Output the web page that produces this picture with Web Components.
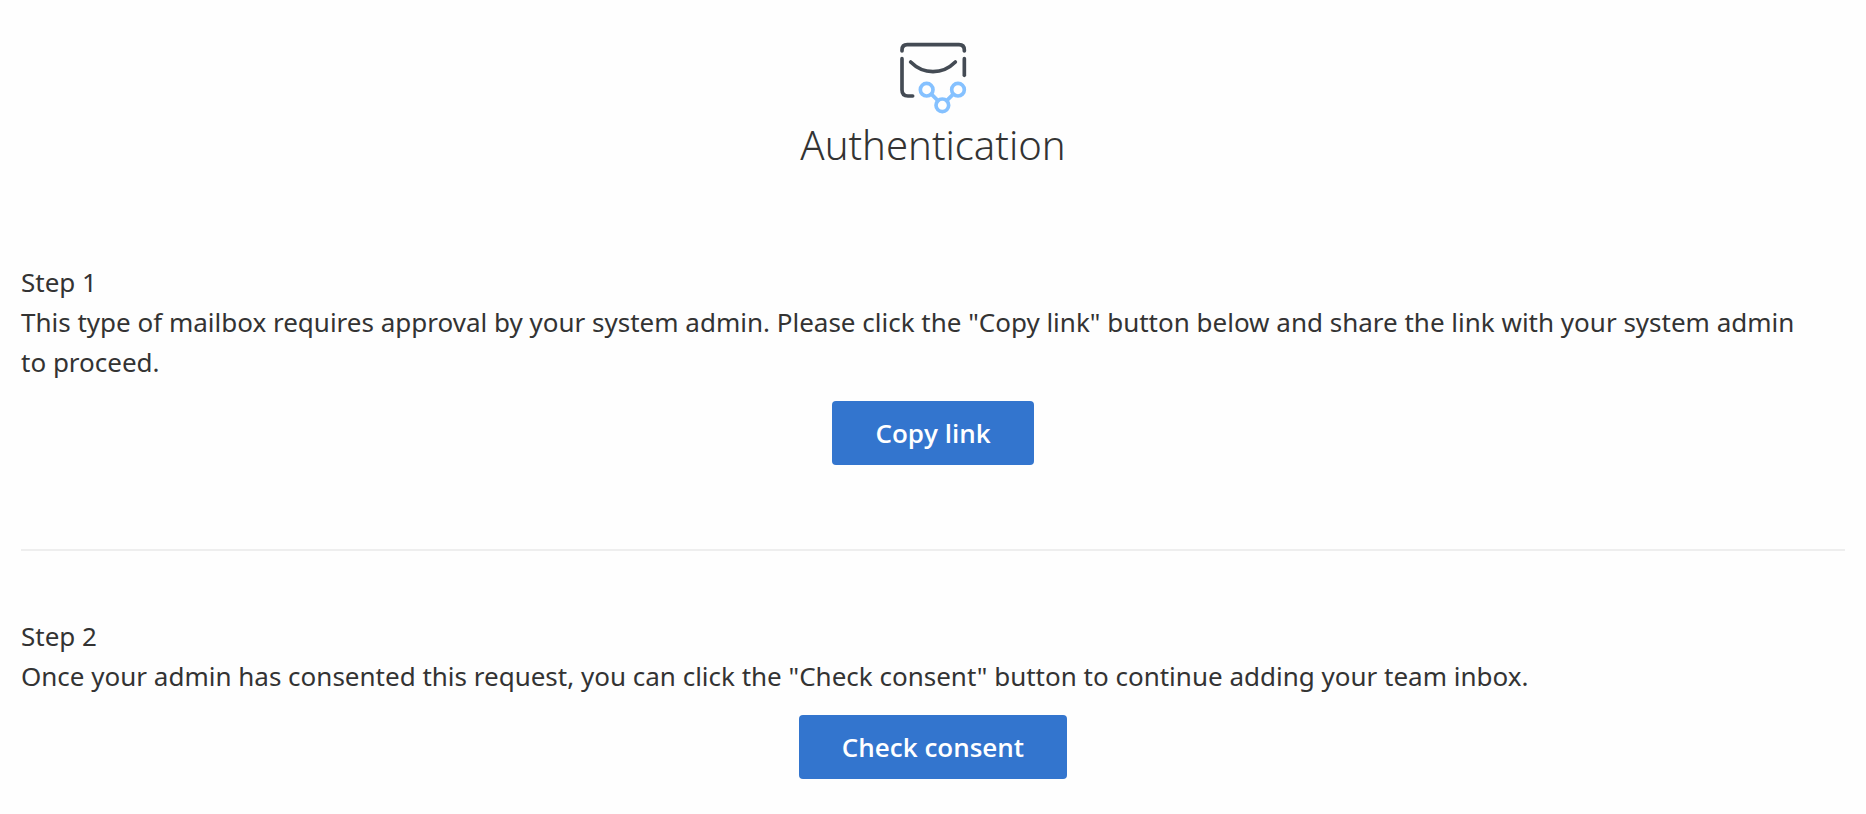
<!DOCTYPE html>
<html lang="en">
<head>
  <meta charset="utf-8">
  <meta name="viewport" content="width=device-width, initial-scale=1">
  <title>Authentication</title>
  <style>
    body {
      margin: 0;
      background: #fefefe;
      color: #333;
      font-family: "Noto Sans", "Open Sans", sans-serif;
      font-size: 26px;
      line-height: 40px;
    }

    .keep {
      white-space: nowrap;
    }
  </style>
</head>
<body>
  <auth-page>
    <auth-header slot="header">Authentication</auth-header>
    <auth-step>
      <span slot="title">Step 1</span>
      This type of mailbox requires approval by your system admin. Please click the "Copy link" button below and share the link with your system admin <span class="keep">to proceed.</span>
      <primary-button slot="action">Copy link</primary-button>
    </auth-step>
    <hr>
    <auth-step>
      <span slot="title">Step 2</span>
      Once your admin has consented this request, you can click the "Check consent" button to continue adding your team inbox.
      <primary-button slot="action">Check consent</primary-button>
    </auth-step>
  </auth-page>

  <script>
    class MailboxIcon extends HTMLElement {
      constructor () {
        super()
        this.attachShadow({ mode: 'open' })
      }

      connectedCallback () {
        this.shadowRoot.innerHTML = `
          <style>
            :host {
              display: block;
            }

            svg {
              display: block;
              width: 70px;
              height: 74px;
            }
          </style>
          <svg viewBox="54 33 210 222" fill="none" stroke-width="11" stroke-linecap="round" aria-hidden="true">
            <g stroke="#444b54">
              <path d="M66 63V60Q66 44 82 44H237Q253 44 253 60V63" />
              <path d="M66 86V180Q66 198 84 198H98" />
              <path d="M253 86V136" />
              <path d="M92 96Q121 125 159 125Q197 125 226 96" />
            </g>
            <g stroke="#85c1ff">
              <path d="M155 193L173 211M219 193L201 211" />
              <circle cx="140" cy="179" r="19" />
              <circle cx="234" cy="179" r="19" />
              <circle cx="187" cy="226" r="19" />
            </g>
          </svg>
        `
      }
    }

    class AuthHeader extends HTMLElement {
      constructor () {
        super()
        this.attachShadow({ mode: 'open' })
      }

      connectedCallback () {
        this.shadowRoot.innerHTML = `
          <style>
            :host {
              display: flex;
              flex-direction: column;
              align-items: center;
              gap: 2px;
            }

            h1 {
              margin: 0;
              font-size: 40px;
              line-height: 56px;
              font-weight: 300;
            }
          </style>
          <mailbox-icon></mailbox-icon>
          <h1><slot></slot></h1>
        `
      }
    }

    class AuthStep extends HTMLElement {
      constructor () {
        super()
        this.attachShadow({ mode: 'open' })
      }

      connectedCallback () {
        this.shadowRoot.innerHTML = `
          <style>
            :host {
              display: block;
            }

            h2, p {
              margin: 0;
              font: inherit;
            }

            .action {
              display: flex;
              justify-content: center;
              margin-top: 19px;
            }
          </style>
          <h2><slot name="title"></slot></h2>
          <p><slot></slot></p>
          <div class="action"><slot name="action"></slot></div>
        `
      }
    }

    class PrimaryButton extends HTMLElement {
      constructor () {
        super()
        this.attachShadow({ mode: 'open' })
      }

      connectedCallback () {
        this.shadowRoot.innerHTML = `
          <style>
            :host {
              display: inline-block;
            }

            button {
              display: block;
              padding: 12px 43px;
              border: 0;
              border-radius: 4px;
              background: #3375ce;
              color: #fff;
              font: inherit;
              font-family: "Open Sans", sans-serif;
              font-weight: 600;
              cursor: pointer;
            }

            button:hover {
              background: #2b66b6;
            }
          </style>
          <button type="button"><slot></slot></button>
        `
      }
    }

    class AuthPage extends HTMLElement {
      constructor () {
        super()
        this.attachShadow({ mode: 'open' })
      }

      connectedCallback () {
        this.shadowRoot.innerHTML = `
          <style>
            :host {
              display: block;
              padding: 41px 21px 35px;
            }

            .steps {
              margin-top: 89px;
            }

            ::slotted(hr) {
              margin: 84px 0 65px;
              border: 0;
              border-top: 2px solid #eee;
            }
          </style>
          <slot name="header"></slot>
          <div class="steps"><slot></slot></div>
        `
      }
    }

    customElements.define('mailbox-icon', MailboxIcon)
    customElements.define('auth-header', AuthHeader)
    customElements.define('auth-step', AuthStep)
    customElements.define('primary-button', PrimaryButton)
    customElements.define('auth-page', AuthPage)
  </script>
</body>
</html>
